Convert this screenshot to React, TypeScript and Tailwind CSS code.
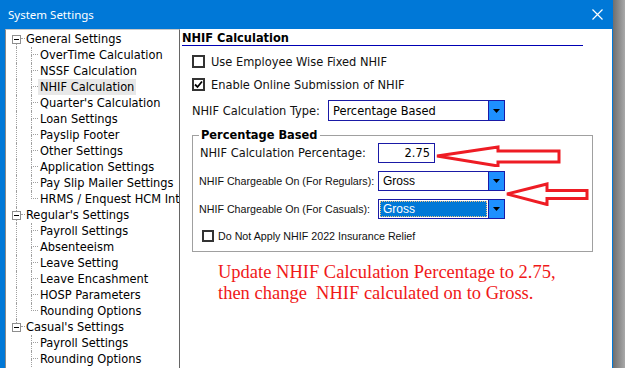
import type { ReactNode } from "react";

const tahoma = { fontFamily: '"DejaVu Sans Condensed", "DejaVu Sans", sans-serif' };
const msSans = { fontFamily: '"Liberation Sans", Arial, sans-serif' };

type Node = { label: string; root?: boolean; first?: boolean; lastRoot?: boolean; lastChild?: boolean; selected?: boolean };

const tree: Node[] = [
  { label: "General Settings", root: true, first: true },
  { label: "OverTime Calculation" },
  { label: "NSSF Calculation" },
  { label: "NHIF Calculation", selected: true },
  { label: "Quarter's Calculation" },
  { label: "Loan Settings" },
  { label: "Payslip Footer" },
  { label: "Other Settings" },
  { label: "Application Settings" },
  { label: "Pay Slip Mailer Settings" },
  { label: "HRMS / Enquest HCM Integration", lastChild: true },
  { label: "Regular's Settings", root: true },
  { label: "Payroll Settings" },
  { label: "Absenteeism" },
  { label: "Leave Setting" },
  { label: "Leave Encashment" },
  { label: "HOSP Parameters" },
  { label: "Rounding Options", lastChild: true },
  { label: "Casual's Settings", root: true, lastRoot: true },
  { label: "Payroll Settings", lastRoot: true },
  { label: "Rounding Options", lastRoot: true },
];

const dot = "border-dotted border-[#a0a0a0]";

function TreeRow({ n }: { n: Node }) {
  if (n.root) {
    return (
      <div className="flex h-4 shrink-0 items-stretch">
        <div className="w-[6px] shrink-0" />
        <div className="flex w-[9px] shrink-0 flex-col">
          <div className={`ml-[4px] flex-1 ${n.first ? "" : `border-l ${dot}`}`} />
          <div className="flex h-[9px] w-[9px] items-center justify-center border border-[#8e8e8e] bg-white">
            <div className="h-px w-[5px] bg-black" />
          </div>
          <div className={`ml-[4px] flex-1 ${n.lastRoot ? "" : `border-l ${dot}`}`} />
        </div>
        <div className={`h-[8px] w-[4px] shrink-0 self-start border-b ${dot}`} />
        <span className="whitespace-nowrap pl-[1px] text-[12.7px] leading-4 text-black">{n.label}</span>
      </div>
    );
  }
  return (
    <div className="flex h-4 shrink-0 items-stretch">
      <div className="w-[10px] shrink-0" />
      <div className={`w-[15px] shrink-0 ${n.lastRoot ? "" : `border-l ${dot}`}`} />
      <div className="flex w-[7px] shrink-0 flex-col">
        <div className={`h-[8px] border-b border-l ${dot}`} />
        <div className={`flex-1 ${n.lastChild ? "" : `border-l ${dot}`}`} />
      </div>
      <span className={`whitespace-nowrap px-[2px] text-[12.7px] leading-4 text-black ${n.selected ? "bg-[#e8e8e8]" : ""}`}>{n.label}</span>
    </div>
  );
}

function CheckBox({ checked, small }: { checked?: boolean; small?: boolean }) {
  return (
    <div className={`flex shrink-0 items-center justify-center border-2 border-[#333333] bg-white ${small ? "h-[12px] w-[12px]" : "h-[13px] w-[13px]"}`}>
      {checked && (
        <svg width="9" height="9" viewBox="0 0 9 9">
          <path d="M1 4.5 L3.5 7 L8 1.5" fill="none" stroke="#000" strokeWidth="1.8" />
        </svg>
      )}
    </div>
  );
}

function Select({ value, w, h, focused, sans }: { value: string; w: string; h: string; focused?: boolean; sans?: boolean }) {
  return (
    <div className={`flex ${w} ${h} shrink-0 border border-[#1a1aa6] bg-white`} style={sans ? msSans : undefined}>
      <div className="flex flex-1 items-center p-[1px]">
        {focused ? (
          <div className="flex h-full flex-1 items-center border border-dotted border-[#f0c080] bg-[#0078d7] pl-[2px] text-[12px] text-white">
            {value}
          </div>
        ) : (
          <span className={`whitespace-nowrap pl-[3px] text-black ${sans ? "text-[12px]" : "text-[12.7px]"}`}>{value}</span>
        )}
      </div>
      <div className="flex w-[16px] items-center justify-center border-l border-[#1a1aa6] bg-[#1e90ff]">
        <svg width="7" height="4" viewBox="0 0 7 4">
          <path d="M0 0 H7 L3.5 4 Z" fill="#000" />
        </svg>
      </div>
    </div>
  );
}

function Row({ children, className }: { children: ReactNode; className?: string }) {
  return <div className={`flex shrink-0 items-center ${className ?? ""}`}>{children}</div>;
}

export default function App() {
  return (
    <div className="flex h-[368px] w-[625px] overflow-hidden bg-white" style={tahoma}>
      <div className="flex w-[613px] shrink-0 flex-col bg-[#0078d7]">
        <div className="flex h-[29px] shrink-0 items-center justify-between pl-[8px] pr-[10px]">
          <span className="text-[11.5px] text-white" style={{ fontFamily: '"Noto Sans", "Open Sans", sans-serif' }}>
            System Settings
          </span>
          <svg width="11" height="11" viewBox="0 0 11 11" className="mt-[-1px]">
            <path d="M0.5 0.5 L10.5 10.5 M10.5 0.5 L0.5 10.5" stroke="#fff" strokeWidth="1.2" />
          </svg>
        </div>
        <div className="flex min-h-0 flex-1 pl-[5px] pr-px">
          <div className="flex w-[175px] shrink-0 flex-col overflow-hidden border-l border-r border-t border-l-[#8a8a8a] border-r-[#666666] border-t-[#c8c8c8] bg-white pt-px">
            {tree.map((n, i) => (
              <TreeRow key={i} n={n} />
            ))}
          </div>
          <div className="relative flex flex-1 flex-col overflow-hidden bg-white pl-[2px]">
            <div className="h-[17px] w-[401px] shrink-0 border-b border-[#0000b4] text-[12.7px] font-bold leading-[17px] text-black">
              NHIF Calculation
            </div>
            <div className="flex flex-col pl-[10px]">
              <Row className="mt-[9px] h-[13px] gap-[6px]">
                <CheckBox />
                <span className="whitespace-nowrap text-[12.7px] text-[#111]">Use Employee Wise Fixed NHIF</span>
              </Row>
              <Row className="mt-[10px] h-[13px] gap-[6px]">
                <CheckBox checked />
                <span className="whitespace-nowrap text-[12.7px] text-[#111]">Enable Online Submission of NHIF</span>
              </Row>
              <Row className="mt-[9px] h-[21px]">
                <span className="w-[136px] shrink-0 whitespace-nowrap text-[12.7px] text-[#111]">NHIF Calculation Type:</span>
                <Select value="Percentage Based" w="w-[177px]" h="h-[21px]" />
              </Row>
              <div className="mt-[14px] flex h-[117px] w-[401px] shrink-0 flex-col border border-[#a0a0a0]">
                <div className="ml-[6px] mt-[-9px] h-4 w-fit bg-white px-[2px] text-[12.7px] font-bold leading-4 text-black">
                  Percentage Based
                </div>
                <div className="flex flex-col pl-[6px]">
                  <Row className="h-[20px]">
                    <span className="w-[179px] shrink-0 whitespace-nowrap pl-px text-[12.7px] text-[#111]">NHIF Calculation Percentage:</span>
                    <div className="flex h-[20px] w-[57px] items-center justify-end border border-[#1a1aa6] pr-[4px] text-[12.7px] text-black">
                      2.75
                    </div>
                  </Row>
                  <Row className="mt-[8px] h-[20px]">
                    <span className="w-[179px] shrink-0 whitespace-nowrap text-[10.7px] text-[#111]" style={msSans}>
                      NHIF Chargeable On (For Regulars):
                    </span>
                    <Select value="Gross" w="w-[127px]" h="h-[20px]" sans />
                  </Row>
                  <Row className="mt-[8px] h-[20px]">
                    <span className="w-[179px] shrink-0 whitespace-nowrap text-[10.7px] text-[#111]" style={msSans}>
                      NHIF Chargeable On (For Casuals):
                    </span>
                    <Select value="Gross" w="w-[127px]" h="h-[20px]" focused sans />
                  </Row>
                  <Row className="mt-[11px] h-[12px] gap-[4px] pl-[3px]">
                    <CheckBox small />
                    <span className="whitespace-nowrap text-[10.7px] text-[#111]" style={msSans}>
                      Do Not Apply NHIF 2022 Insurance Relief
                    </span>
                  </Row>
                </div>
              </div>
              <div
                className="mt-[10px] pl-[26px] text-[18.5px] leading-[21px] text-[#f01818]"
                style={{ fontFamily: '"Liberation Serif", "Times New Roman", serif' }}
              >
                <div className="whitespace-nowrap">Update NHIF Calculation Percentage to 2.75,</div>
                <div className="whitespace-pre">then change  NHIF calculated on to Gross.</div>
              </div>
            </div>
            <svg className="absolute left-[255px] top-[116px]" width="130" height="22" viewBox="0 0 130 22">
              <path d="M2 11 L63 2 L63 6 L124 6 L124 17 L63 17 L63 21 Z" fill="none" stroke="#ee1c24" strokeWidth="3" />
            </svg>
            <svg className="absolute left-[325px] top-[153px]" width="85" height="24" viewBox="0 0 85 24">
              <path d="M2 12 L42 2 L42 8.5 L82 8.5 L82 16.5 L42 16.5 L42 22.5 Z" fill="none" stroke="#ee1c24" strokeWidth="3" />
            </svg>
          </div>
        </div>
      </div>
      <div className="w-[12px] shrink-0 bg-gradient-to-r from-[#6f6f6f] to-[#a9a9a9]" />
    </div>
  );
}
